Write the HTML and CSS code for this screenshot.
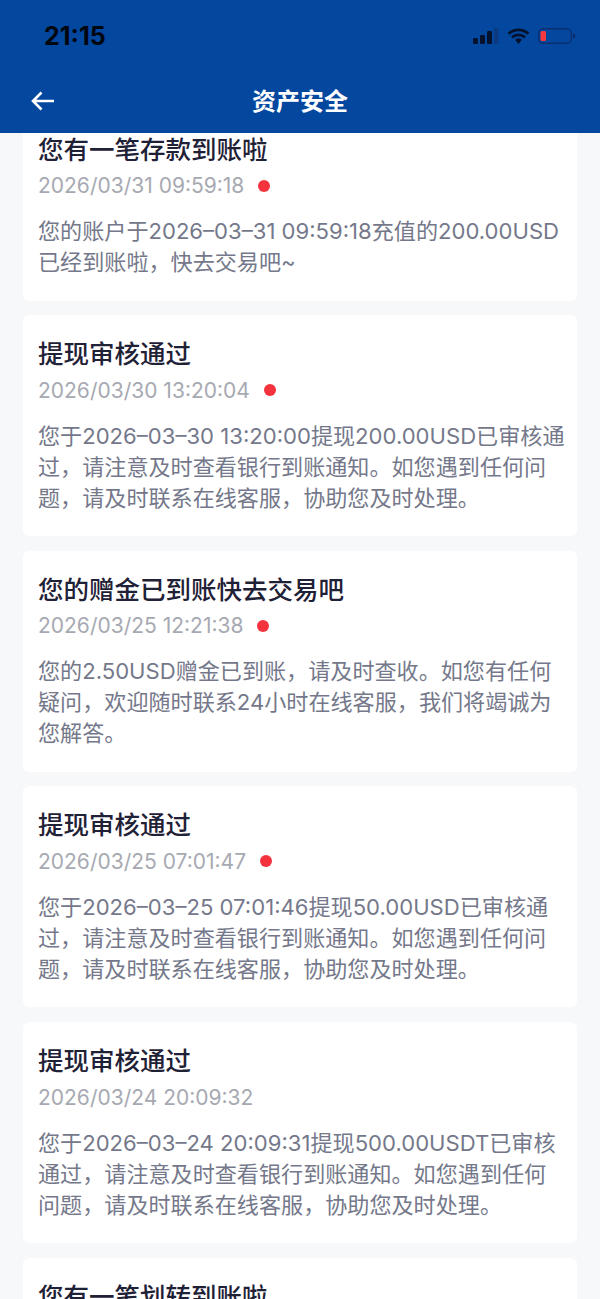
FILE: index.html
```html
<!DOCTYPE html>
<html lang="zh-CN">
<head>
<meta charset="utf-8">
<title>资产安全</title>
<link rel="stylesheet" href="styles.css">
</head>
<body>
<header class="top">
  <div class="status">
    <span class="time">21:15</span>
    <div class="status-icons">
      <svg class="signal" width="26" height="16" viewBox="0 0 26 16"><rect x="0" y="10" width="5" height="6" rx="1.2" fill="#04122e"/><rect x="7" y="7" width="5" height="9" rx="1.2" fill="#04122e"/><rect x="14" y="3" width="5" height="13" rx="1.2" fill="#04122e"/><rect x="21" y="0" width="4.5" height="16" rx="1.2" fill="#0b3a80"/></svg>
      <svg class="wifi" width="23" height="16" viewBox="0 0 23 16"><path d="M1.500 5.800a14.500 14.500 0 0 1 20 0M5 9.400a9.500 9.500 0 0 1 13 0" fill="none" stroke="#04122e" stroke-width="2.800"/><path d="M8 11.800a5.200 5.200 0 0 1 7 0L11.500 16z" fill="#04122e"/></svg>
      <svg class="battery" width="38" height="16" viewBox="0 0 38 16"><rect x="0.700" y="0.700" width="32.600" height="14.600" rx="4.500" fill="none" stroke="#0b2f6e" stroke-width="1.400"/><rect x="2.500" y="3" width="5.500" height="10" rx="1.500" fill="#f6383f"/><path d="M35 5.500c2 .5 2.500 1.400 2.500 2.500s-.5 2-2.500 2.500z" fill="#0b2f6e"/></svg>
    </div>
  </div>
  <div class="nav">
    <svg class="back" width="24" height="20" viewBox="0 0 24 20"><path d="M23 10H2M10.500 1.500 2 10l8.500 8.500" fill="none" stroke="#fff" stroke-width="2.600"/></svg>
    <h1 class="nav-title">资产安全</h1>
  </div>
</header>
<main class="list">
  <article class="card card-short">
    <h2 class="card-title">您有一笔存款到账啦</h2>
    <div class="meta"><time class="date">2026/03/31 09:59:18</time><span class="dot"></span></div>
    <p class="body">您的账户于2026–03–31 09:59:18充值的200.00USD已经到账啦，快去交易吧~</p>
  </article>
  <article class="card">
    <h2 class="card-title">提现审核通过</h2>
    <div class="meta"><time class="date">2026/03/30 13:20:04</time><span class="dot"></span></div>
    <p class="body">您于2026–03–30 13:20:00提现200.00USD已审核通过，请注意及时查看银行到账通知。如您遇到任何问题，请及时联系在线客服，协助您及时处理。</p>
  </article>
  <article class="card">
    <h2 class="card-title">您的赠金已到账快去交易吧</h2>
    <div class="meta"><time class="date">2026/03/25 12:21:38</time><span class="dot"></span></div>
    <p class="body">您的2.50USD赠金已到账，请及时查收。如您有任何疑问，欢迎随时联系24小时在线客服，我们将竭诚为您解答。</p>
  </article>
  <article class="card">
    <h2 class="card-title">提现审核通过</h2>
    <div class="meta"><time class="date">2026/03/25 07:01:47</time><span class="dot"></span></div>
    <p class="body">您于2026–03–25 07:01:46提现50.00USD已审核通过，请注意及时查看银行到账通知。如您遇到任何问题，请及时联系在线客服，协助您及时处理。</p>
  </article>
  <article class="card">
    <h2 class="card-title">提现审核通过</h2>
    <div class="meta"><time class="date">2026/03/24 20:09:32</time></div>
    <p class="body">您于2026–03–24 20:09:31提现500.00USDT已审核通过，请注意及时查看银行到账通知。如您遇到任何问题，请及时联系在线客服，协助您及时处理。</p>
  </article>
  <article class="card">
    <h2 class="card-title">您有一笔划转到账啦</h2>
  </article>
</main>
</body>
</html>
```
FILE: styles.css
```css
* { box-sizing: border-box; margin: 0; padding: 0; }
html, body { height: 1299px; overflow: hidden; }
body {
  background: #f7f8fa;
  font-family: "Inter", "Noto Sans CJK SC", sans-serif;
  display: flex;
  flex-direction: column;
}
.top {
  position: relative;
  z-index: 2;
  flex: none;
  height: 133px;
  background: #03479f;
  display: flex;
  flex-direction: column;
}
.status {
  height: 72px;
  padding: 0 24px 0 44px;
  display: flex;
  align-items: center;
  justify-content: space-between;
}
.time { font-size: 25px; font-weight: 700; color: #02060f; font-family: "Inter", sans-serif; }
.status-icons { display: flex; align-items: center; gap: 8px; }
.nav {
  position: relative;
  height: 60px;
  display: flex;
  align-items: center;
  justify-content: center;
}
.back { position: absolute; left: 31px; top: 19px; }
.nav-title { font-size: 24px; font-weight: 700; color: #fff; line-height: 60px; }
.list {
  flex: none;
  margin-top: -22.500px;
  padding: 0 23px;
  display: flex;
  flex-direction: column;
  gap: 14.670px;
}
.card {
  flex: none;
  min-height: 221px;
  background: #fff;
  border-radius: 6px;
  padding: 24px 12px 22.500px 15px;
}
.card-short { min-height: 189.500px; }
.card-title { font-size: 25.500px; font-weight: 500; line-height: 30px; color: #1f2136; }
.meta { margin-top: 5px; height: 32px; display: flex; align-items: center; gap: 14px; }
.date { font-size: 21px; color: #a7a9b2; }
.dot { width: 12px; height: 12px; border-radius: 50%; background: #f5333f; }
.body { margin-top: 14.500px; font-size: 22.100px; line-height: 31px; color: #74788a; }
```
